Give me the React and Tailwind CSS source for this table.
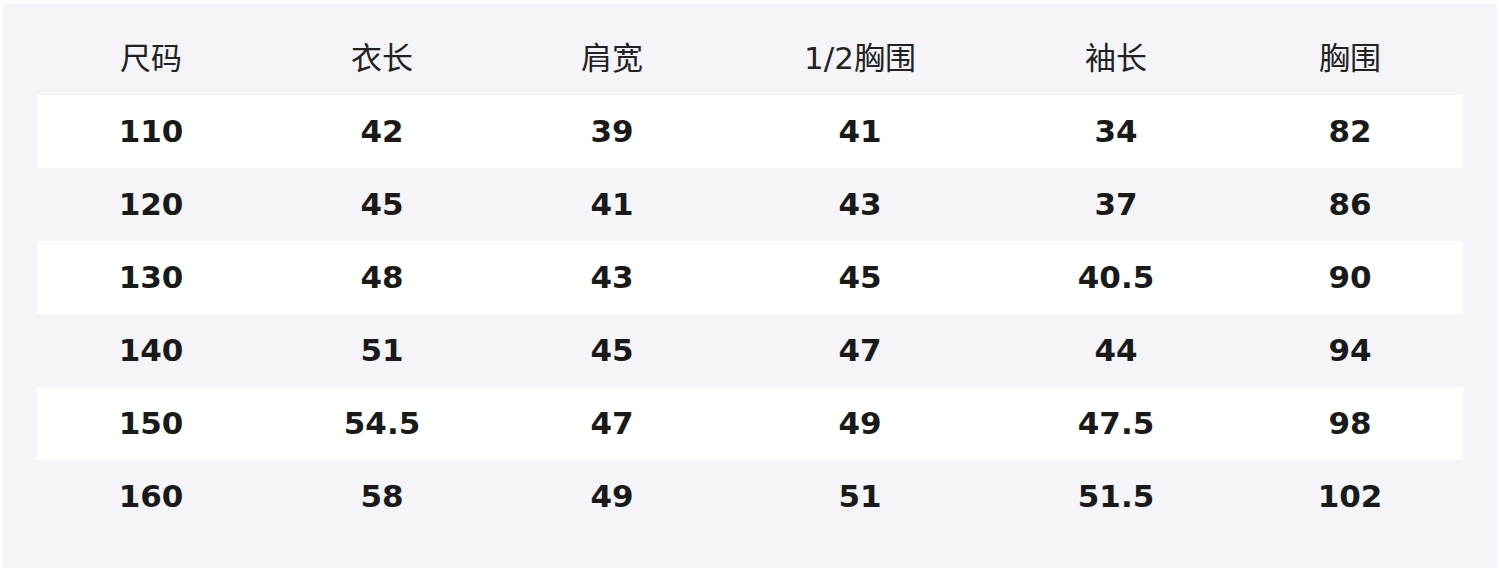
import React from "react";

const headers = ["尺码", "衣长", "肩宽", "1/2胸围", "袖长", "胸围"];
const rows = [
  ["110", "42", "39", "41", "34", "82"],
  ["120", "45", "41", "43", "37", "86"],
  ["130", "48", "43", "45", "40.5", "90"],
  ["140", "51", "45", "47", "44", "94"],
  ["150", "54.5", "47", "49", "47.5", "98"],
  ["160", "58", "49", "51", "51.5", "102"],
];

export default function App() {
  return (
    <div className="w-[1500px] h-[572px] bg-white p-[3px]" style={{ fontFamily: '"DejaVu Sans", "Noto Sans CJK SC", sans-serif' }}>
      <div className="w-full h-[565px] bg-[#f4f4f9] rounded-[3px] px-[34px] pt-[19px]">
        <div className="grid grid-cols-[228px_234px_226px_270px_242px_226px] h-[73px] items-center text-[31px] text-[#222222]">
          {headers.map((h, i) => (
            <div key={i} className="text-center">{h}</div>
          ))}
        </div>
        {rows.map((r, ri) => (
          <div
            key={ri}
            className={
              "grid grid-cols-[228px_234px_226px_270px_242px_226px] h-[73px] items-center text-[31px] font-bold text-[#1a1a1a] " +
              (ri % 2 === 0 ? "bg-white" : "")
            }
          >
            {r.map((c, ci) => (
              <div key={ci} className="text-center">{c}</div>
            ))}
          </div>
        ))}
      </div>
    </div>
  );
}
